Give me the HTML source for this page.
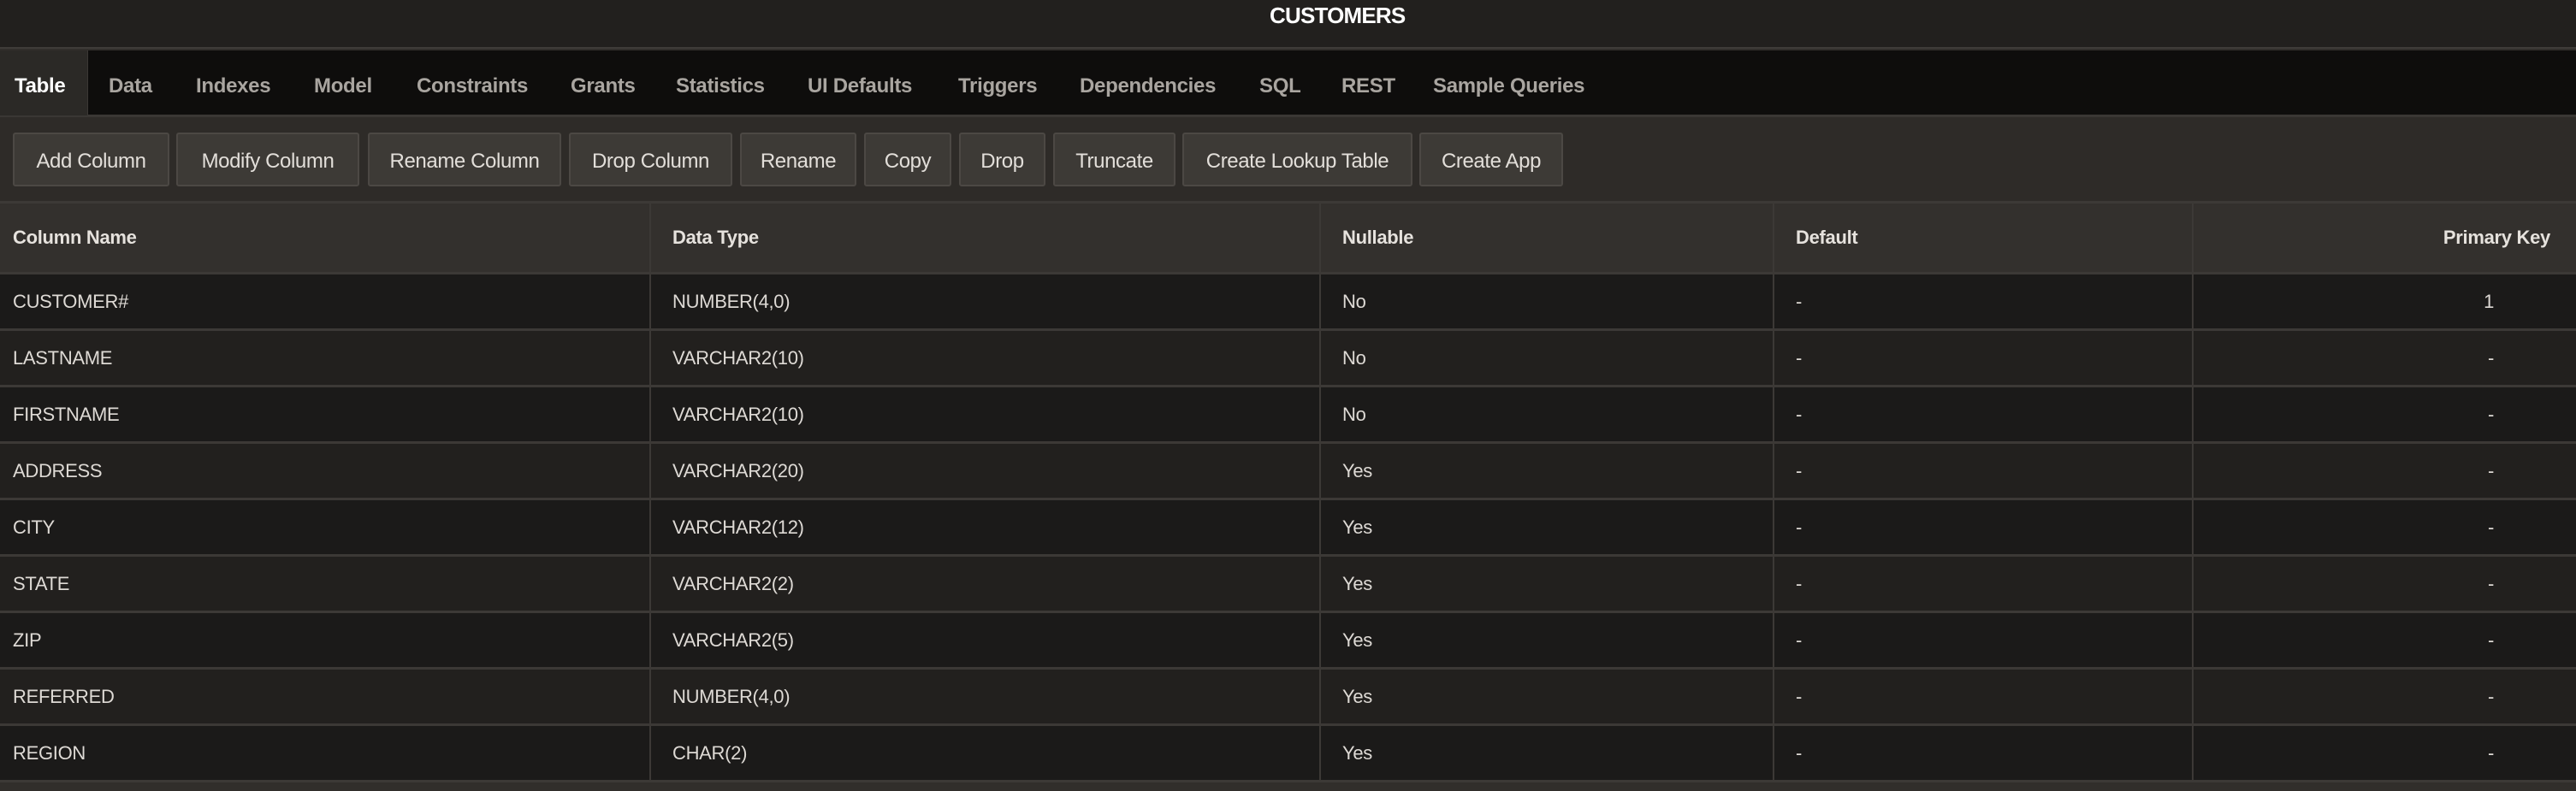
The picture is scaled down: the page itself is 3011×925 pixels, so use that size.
<!DOCTYPE html>
<html><head><meta charset="utf-8"><style>
*{margin:0;padding:0;box-sizing:border-box}
body{width:3011px;height:925px;background:#312e2b;font-family:"Liberation Sans",sans-serif;color:#dedad5;position:relative;overflow:hidden}
.a{position:absolute}
#title{left:0;top:0;width:3011px;height:57px;background:#22201e;border-bottom:2px solid #3f3c39}
#title span{position:absolute;left:1484px;top:3px;font-weight:bold;font-size:26px;color:#fff;letter-spacing:-0.8px}
#tabs{left:0;top:59px;width:3011px;height:78px;background:#0e0d0c;border-bottom:3px solid #3a3734}
.tab{position:absolute;top:28px;font-weight:bold;font-size:24px;color:#a9a5a0;letter-spacing:-0.3px}
#act{left:0;top:59px;width:103px;height:76px;background:#2b2926;border-right:1px solid #3b3835}
#tb{left:0;top:137px;width:3011px;height:98px;background:#2e2b28}
.btn{position:absolute;top:155px;height:63px;background:#3d3a36;border:2px solid #4c4844;border-radius:3px;font-size:24px;color:#e2ded9;text-align:center;line-height:63px;letter-spacing:-0.4px}
table{position:absolute;left:0;top:235px;width:3011px;border-collapse:collapse}
th,td{height:66px;font-size:22px;padding:0 15px 0 25px;text-align:left;border-left:2px solid #3c3936;letter-spacing:-0.3px}
th{height:83px;background:#33302d;font-weight:bold;color:#e6e2dd;border-top:3px solid #3c3936}
tr{border-bottom:3px solid #3c3936}
th:first-child,td:first-child{border-left:none;padding-left:15px}
tbody tr:nth-child(odd){background:#1b1a19}
tbody tr:nth-child(even){background:#22201e}
.r{text-align:right;padding-right:30px}
.c{text-align:right;padding-right:96px}
</style></head><body>
<div class="a" id="title"><span>CUSTOMERS</span></div>
<div class="a" id="tabs">
<div class="tab" style="left:127px">Data</div>
<div class="tab" style="left:229px">Indexes</div>
<div class="tab" style="left:367px">Model</div>
<div class="tab" style="left:487px">Constraints</div>
<div class="tab" style="left:667px">Grants</div>
<div class="tab" style="left:790px">Statistics</div>
<div class="tab" style="left:944px">UI Defaults</div>
<div class="tab" style="left:1120px">Triggers</div>
<div class="tab" style="left:1262px">Dependencies</div>
<div class="tab" style="left:1472px">SQL</div>
<div class="tab" style="left:1568px">REST</div>
<div class="tab" style="left:1675px">Sample Queries</div>
</div>
<div class="a" id="act"><div class="tab" style="left:17px;color:#fff">Table</div></div>
<div class="a" id="tb"></div>
<div class="btn" style="left:15px;width:183px">Add Column</div>
<div class="btn" style="left:206px;width:214px">Modify Column</div>
<div class="btn" style="left:430px;width:226px">Rename Column</div>
<div class="btn" style="left:665px;width:191px">Drop Column</div>
<div class="btn" style="left:865px;width:136px">Rename</div>
<div class="btn" style="left:1010px;width:102px">Copy</div>
<div class="btn" style="left:1121px;width:101px">Drop</div>
<div class="btn" style="left:1231px;width:143px">Truncate</div>
<div class="btn" style="left:1382px;width:269px">Create Lookup Table</div>
<div class="btn" style="left:1659px;width:168px">Create App</div>
<table>
<colgroup><col style="width:760px"><col style="width:783px"><col style="width:530px"><col style="width:490px"><col></colgroup>
<thead><tr><th>Column Name</th><th>Data Type</th><th>Nullable</th><th>Default</th><th class="r">Primary Key</th></tr></thead>
<tbody>
<tr><td>CUSTOMER#</td><td>NUMBER(4,0)</td><td>No</td><td>-</td><td class="c">1</td></tr>
<tr><td>LASTNAME</td><td>VARCHAR2(10)</td><td>No</td><td>-</td><td class="c">-</td></tr>
<tr><td>FIRSTNAME</td><td>VARCHAR2(10)</td><td>No</td><td>-</td><td class="c">-</td></tr>
<tr><td>ADDRESS</td><td>VARCHAR2(20)</td><td>Yes</td><td>-</td><td class="c">-</td></tr>
<tr><td>CITY</td><td>VARCHAR2(12)</td><td>Yes</td><td>-</td><td class="c">-</td></tr>
<tr><td>STATE</td><td>VARCHAR2(2)</td><td>Yes</td><td>-</td><td class="c">-</td></tr>
<tr><td>ZIP</td><td>VARCHAR2(5)</td><td>Yes</td><td>-</td><td class="c">-</td></tr>
<tr><td>REFERRED</td><td>NUMBER(4,0)</td><td>Yes</td><td>-</td><td class="c">-</td></tr>
<tr><td>REGION</td><td>CHAR(2)</td><td>Yes</td><td>-</td><td class="c">-</td></tr>
</tbody></table>
</body></html>
